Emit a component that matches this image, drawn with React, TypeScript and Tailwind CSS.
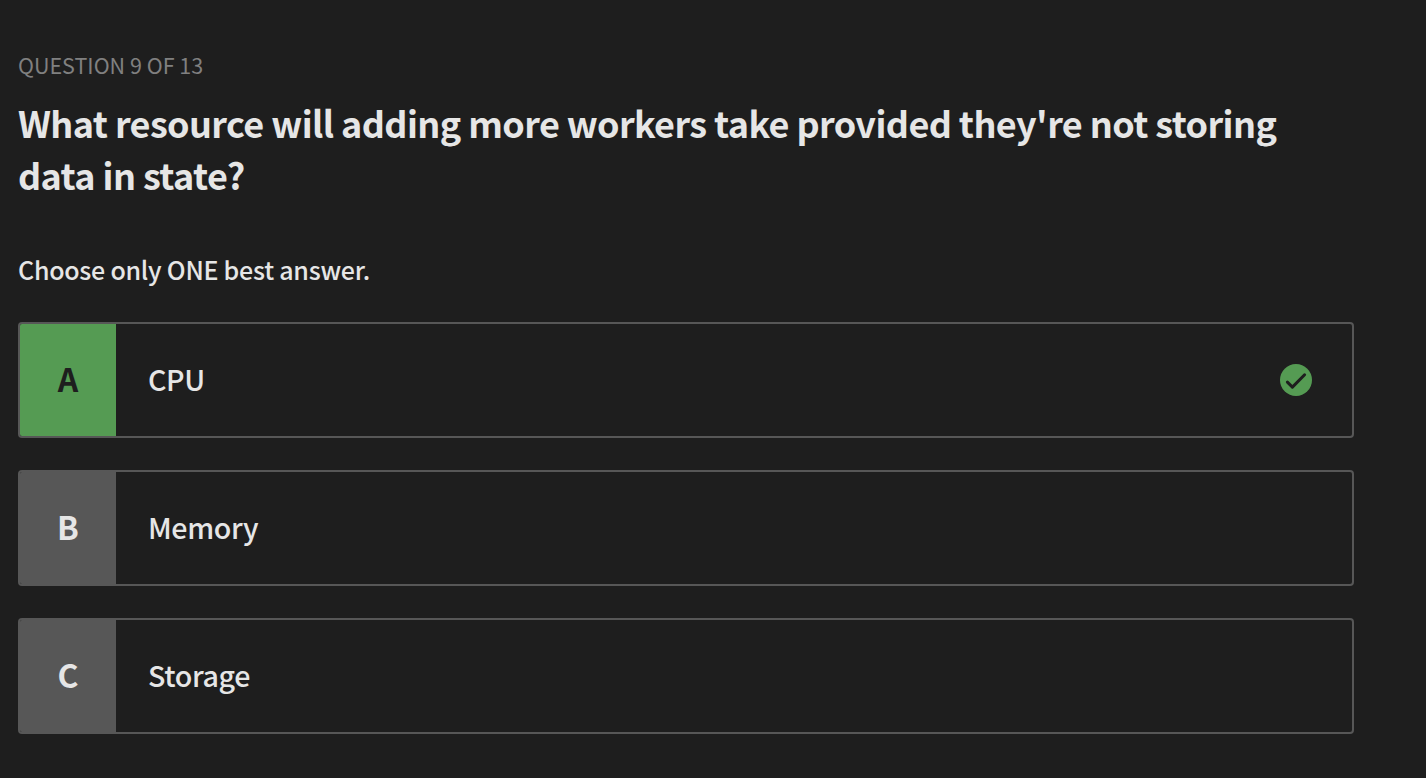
const answers = [
  { letter: "A", text: "CPU", correct: true },
  { letter: "B", text: "Memory", correct: false },
  { letter: "C", text: "Storage", correct: false },
];

function CheckIcon() {
  return (
    <svg className="size-8" viewBox="0 0 32 32" fill="none" aria-hidden="true">
      <circle cx="16" cy="16" r="16" fill="#559b53" />
      <path
        d="M7.4 18.1 L12.4 23.1 L24.6 10.8"
        stroke="#1e1e1e"
        strokeWidth="3"
        strokeLinecap="round"
        strokeLinejoin="round"
      />
    </svg>
  );
}

export default function App() {
  return (
    <main className="h-screen overflow-hidden bg-[#1e1e1e] pl-[18px] pr-[72px] pt-[49px] font-['Noto_Sans_CJK_SC',sans-serif] text-[#e6e6e6]">
      <p className="text-[21.5px] leading-8 text-[#808080]">QUESTION 9 OF 13</p>
      <h1 className="mt-[15px] text-[36px] font-bold leading-[52px] tracking-[-0.6px]">
        What resource will adding more workers take provided they're not storing data in state?
      </h1>
      <p className="mt-[49px] text-[25px] font-medium leading-10 tracking-[-0.01em]">Choose only ONE best answer.</p>
      <ul className="mt-[33px] flex flex-col gap-8">
        {answers.map(({ letter, text, correct }) => (
          <li key={letter} className="flex h-[116px] items-stretch overflow-hidden rounded border-2 border-[#575757]">
            <span
              className={`flex w-24 items-center justify-center pb-[5px] text-[32px] font-bold leading-none ${
                correct ? "bg-[#559b53] text-[#1e1e1e]" : "bg-[#575757]"
              }`}
            >
              {letter}
            </span>
            <span className="flex flex-1 items-center pb-px pl-8 text-[28.6px] font-medium leading-none tracking-[-0.013em]">
              {text}
            </span>
            {correct && (
              <span className="flex items-center pr-10">
                <CheckIcon />
              </span>
            )}
          </li>
        ))}
      </ul>
    </main>
  );
}
